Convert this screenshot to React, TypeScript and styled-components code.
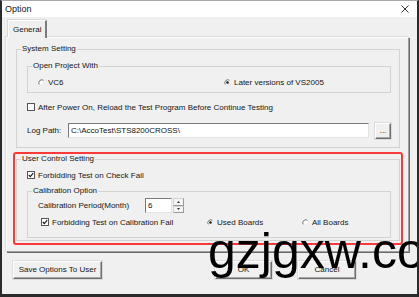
import styled, { createGlobalStyle } from "styled-components";

const GlobalStyle = createGlobalStyle`
  html, body {
    margin: 0;
    padding: 0;
    background: #ffffff;
  }
  body {
    font-family: "Liberation Sans", Arial, sans-serif;
    font-size: 8px;
    color: #151515;
  }
`;

const Window = styled.div`
  position: relative;
  width: 419px;
  height: 297px;
  box-sizing: border-box;
  border-top: 1px solid #a9a9a9;
  border-left: 2px solid #2b2b2b;
  border-right: 2px solid #2b2b2b;
  border-bottom: 3px solid #2b2b2b;
  background: #f0f0f0;
  display: flex;
  flex-direction: column;
  overflow: hidden;
`;

const TitleBar = styled.div`
  height: 16px;
  background: #ffffff;
  display: flex;
  align-items: center;
  justify-content: space-between;
  padding: 0 8px 0 3px;
  font-size: 9px;
`;

const Body = styled.div`
  padding: 3px 8px 0 4px;
`;

const TabStrip = styled.div`
  display: flex;
  padding-left: 2px;
`;

const Tab = styled.div`
  position: relative;
  z-index: 1;
  height: 17px;
  line-height: 17px;
  margin-bottom: -1px;
  padding: 0 4px;
  width: 28px;
  background: #f0f0f0;
  border-left: 1px solid #ffffff;
  border-top: 1px solid #ffffff;
  border-right: 2px solid #7c7c7c;
  box-shadow: -1px -1px 0 #d8d8d8;
`;

const Panel = styled.div`
  border-top: 1px solid #ffffff;
  border-left: 1px solid #ffffff;
  border-right: 1px solid #a0a0a0;
  border-bottom: 1px solid #a0a0a0;
  box-shadow: 1px 1px 0 #6b6b6b, -1px -1px 0 #dadada;
  padding: 6px 8px 6px 9px;
`;

const Group = styled.fieldset<{ $pt: number; $pb: number }>`
  margin: 0;
  min-width: 0;
  padding: ${(p) => p.$pt}px 8px ${(p) => p.$pb}px 10px;
  border: 1px solid #d3d3d3;
`;

const Legend = styled.legend`
  padding: 0 1px;
  margin-left: -6px;
  line-height: 10px;
  font-size: 8px;
`;

const Highlight = styled.div`
  margin: 4px -3px 0;
  padding: 0 1px 2px;
  border: 2px solid #fa3a3a;
  border-radius: 3px;
`;

const Row = styled.div<{ $mt?: number; $h?: number; $ml?: number }>`
  display: flex;
  align-items: center;
  height: ${(p) => p.$h ?? 12}px;
  margin-top: ${(p) => p.$mt ?? 0}px;
  margin-left: ${(p) => p.$ml ?? 0}px;
`;

const Choice = styled.label<{ $w?: number }>`
  display: flex;
  align-items: center;
  gap: 3px;
  width: ${(p) => (p.$w ? `${p.$w}px` : "auto")};
  white-space: nowrap;
`;

const FieldLabel = styled.span<{ $w: number }>`
  width: ${(p) => p.$w}px;
  flex: none;
  white-space: nowrap;
`;

const TextBox = styled.input<{ $w?: number }>`
  box-sizing: border-box;
  height: 15px;
  width: ${(p) => (p.$w ? `${p.$w}px` : "auto")};
  flex: ${(p) => (p.$w ? "none" : "1")};
  min-width: 0;
  margin: 0;
  padding: 0 2px;
  font: inherit;
  font-size: 8px;
  color: #111;
  background: #ffffff;
  border: 1px solid #e3e3e3;
  border-top-color: #7a7a7a;
  border-left-color: #7a7a7a;
  outline: none;
`;

const Spin = styled.div`
  display: flex;
  flex-direction: column;
  margin-left: 1px;
  width: 11px;
  height: 15px;
`;

const SpinHalf = styled.div`
  flex: 1;
  box-sizing: border-box;
  display: flex;
  align-items: center;
  justify-content: center;
  background: #f4f4f4;
  border: 1px solid #d4d4d4;
  border-right-color: #9a9a9a;
  border-bottom-color: #9a9a9a;
`;

const ClassicButton = styled.button<{ $w: number; $h?: number; $ml?: number }>`
  box-sizing: border-box;
  width: ${(p) => p.$w}px;
  height: ${(p) => p.$h ?? 18}px;
  margin: 0 0 0 ${(p) => p.$ml ?? 0}px;
  padding: 0;
  font: inherit;
  font-size: 8px;
  color: #151515;
  background: #f0f0f0;
  border: 1px solid;
  border-color: #ffffff #6e6e6e #6e6e6e #ffffff;
  box-shadow: inset -1px -1px 0 #a8a8a8, 0 0 0 1px #dcdcdc;
  line-height: 1;
`;

const Footer = styled.div`
  display: flex;
  align-items: flex-start;
  padding: 9px 0 0 11px;
`;

const Watermark = styled.div`
  position: absolute;
  left: 206px;
  top: 225px;
  font-family: "Liberation Sans", Arial, sans-serif;
  font-size: 50px;
  line-height: 50px;
  color: #000000;
  white-space: nowrap;
  pointer-events: none;
`;

function CloseIcon() {
  return (
    <svg width="8" height="8" viewBox="0 0 8 8">
      <path d="M0.5 0.5 L7.5 7.5 M7.5 0.5 L0.5 7.5" stroke="#333" strokeWidth="1" />
    </svg>
  );
}

function Radio({ checked }: { checked?: boolean }) {
  return (
    <svg width="7" height="7" viewBox="0 0 7 7" style={{ flex: "none" }}>
      <circle cx="3.5" cy="3.5" r="3" fill="#fff" />
      <path d="M1.4 5.6 A3 3 0 0 1 5.6 1.4" fill="none" stroke="#6a6a6a" strokeWidth="1" />
      <path d="M5.6 1.4 A3 3 0 0 1 1.4 5.6" fill="none" stroke="#e2e2e2" strokeWidth="1" />
      {checked && <circle cx="3.5" cy="3.5" r="1.3" fill="#1a1a1a" />}
    </svg>
  );
}

function Check({ checked }: { checked?: boolean }) {
  return (
    <svg width="8" height="8" viewBox="0 0 8 8" style={{ flex: "none" }}>
      <rect x="0.5" y="0.5" width="7" height="7" fill="#fff" stroke="#555" />
      {checked && (
        <path d="M1.8 4 L3.3 5.6 L6.2 2.2" fill="none" stroke="#1a1a1a" strokeWidth="1.2" />
      )}
    </svg>
  );
}

function Arrow({ up }: { up?: boolean }) {
  return (
    <svg width="3" height="2" viewBox="0 0 3 2">
      <path d={up ? "M0 2 L1.5 0 L3 2 Z" : "M0 0 L1.5 2 L3 0 Z"} fill="#333" />
    </svg>
  );
}

export default function App() {
  return (
    <>
      <GlobalStyle />
      <Window>
        <TitleBar>
          <span>Option</span>
          <CloseIcon />
        </TitleBar>

        <Body>
          <TabStrip>
            <Tab>General</Tab>
          </TabStrip>
          <Panel>
            <Group $pt={7} $pb={9}>
              <Legend>System Setting</Legend>
              <Group $pt={5} $pb={4}>
                <Legend>Open Project With</Legend>
                <Row>
                  <Choice $w={186}>
                    <Radio />
                    VC6
                  </Choice>
                  <Choice>
                    <Radio checked />
                    Later versions of VS2005
                  </Choice>
                </Row>
              </Group>
              <Row $mt={8}>
                <Choice>
                  <Check />
                  After Power On, Reload the Test Program Before Continue Testing
                </Choice>
              </Row>
              <Row $mt={10} $h={15}>
                <FieldLabel $w={41}>Log Path:</FieldLabel>
                <TextBox readOnly value="C:\AccoTest\STS8200CROSS\" />
                <ClassicButton $w={16} $h={16} $ml={6}>
                  ...
                </ClassicButton>
              </Row>
            </Group>

            <Highlight>
              <Group $pt={5} $pb={2}>
                <Legend>User Control Setting</Legend>
                <Row>
                  <Choice>
                    <Check checked />
                    Forbidding Test on Check Fail
                  </Choice>
                </Row>
                <Row $mt={5} $h={0} />
                <Group $pt={2} $pb={9}>
                  <Legend>Calibration Option</Legend>
                  <Row $h={15}>
                    <FieldLabel $w={107}>Calibration Period(Month)</FieldLabel>
                    <TextBox $w={27} readOnly value="6" />
                    <Spin>
                      <SpinHalf>
                        <Arrow up />
                      </SpinHalf>
                      <SpinHalf>
                        <Arrow />
                      </SpinHalf>
                    </Spin>
                  </Row>
                  <Row $mt={3} $ml={3}>
                    <Choice $w={166}>
                      <Check checked />
                      Forbidding Test on Calibration Fail
                    </Choice>
                    <Choice $w={95}>
                      <Radio checked />
                      Used Boards
                    </Choice>
                    <Choice>
                      <Radio />
                      All Boards
                    </Choice>
                  </Row>
                </Group>
              </Group>
            </Highlight>
          </Panel>
        </Body>

        <Footer>
          <ClassicButton $w={89}>Save Options To User</ClassicButton>
          <ClassicButton $w={57} $ml={113}>
            OK
          </ClassicButton>
          <ClassicButton $w={58} $ml={26}>
            Cancel
          </ClassicButton>
        </Footer>

        <Watermark>gzjgxw.com</Watermark>
      </Window>
    </>
  );
}
